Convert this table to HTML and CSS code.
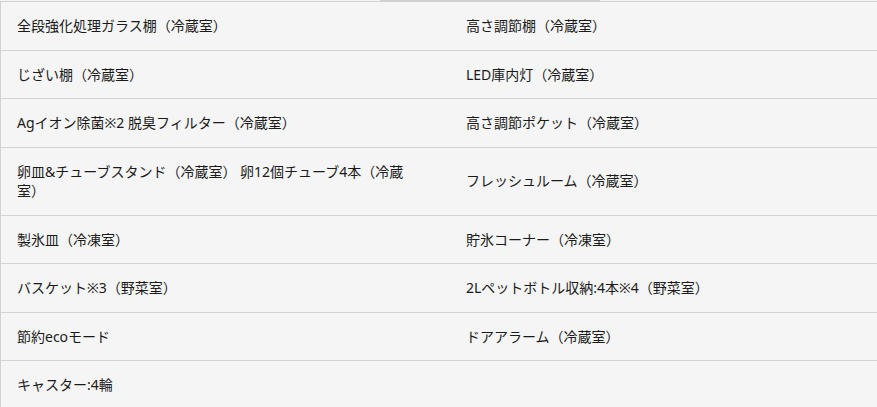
FILE: index.html
```html
<!DOCTYPE html>
<html lang="ja">
<head>
<meta charset="utf-8">
<link rel="stylesheet" href="styles.css">
</head>
<body>
<div class="topstrip"><span class="tabmark"></span></div>
<table class="spec">
  <tr><td>全段強化処理ガラス棚（冷蔵室）</td><td>高さ調節棚（冷蔵室）</td></tr>
  <tr><td>じざい棚（冷蔵室）</td><td>LED庫内灯（冷蔵室）</td></tr>
  <tr><td>Agイオン除菌※2 脱臭フィルター（冷蔵室）</td><td>高さ調節ポケット（冷蔵室）</td></tr>
  <tr><td>卵皿&amp;チューブスタンド（冷蔵室） 卵12個チューブ4本（冷蔵室）</td><td>フレッシュルーム（冷蔵室）</td></tr>
  <tr><td>製氷皿（冷凍室）</td><td>貯氷コーナー（冷凍室）</td></tr>
  <tr><td>バスケット※3（野菜室）</td><td>2Lペットボトル収納:4本※4（野菜室）</td></tr>
  <tr><td>節約ecoモード</td><td>ドアアラーム（冷蔵室）</td></tr>
  <tr><td>キャスター:4輪</td><td></td></tr>
</table>
</body>
</html>
```

FILE: styles.css
```css
html, body {
  margin: 0;
  padding: 0;
  background: #f5f5f5;
}
body {
  font-family: "Noto Sans", "Noto Sans CJK JP", sans-serif;
  font-size: 14px;
  color: #1a1a1a;
}
.topstrip {
  height: 1px;
  display: flex;
}
.tabmark {
  display: block;
  margin-left: 380px;
  width: 220px;
  height: 1px;
  background: #cfcfcf;
}
.spec {
  width: 100%;
  border-collapse: collapse;
  border-top: 1px solid #d2d2d2;
  border-left: 1px solid #d2d2d2;
}
.spec td {
  vertical-align: middle;
  line-height: 19.5px;
  padding: 14px 40px 14px 16px;
  border-bottom: 1px solid #d2d2d2;
}
.spec td:first-child {
  width: 393px;
}
.spec td:last-child {
  padding-left: 16px;
}
```
